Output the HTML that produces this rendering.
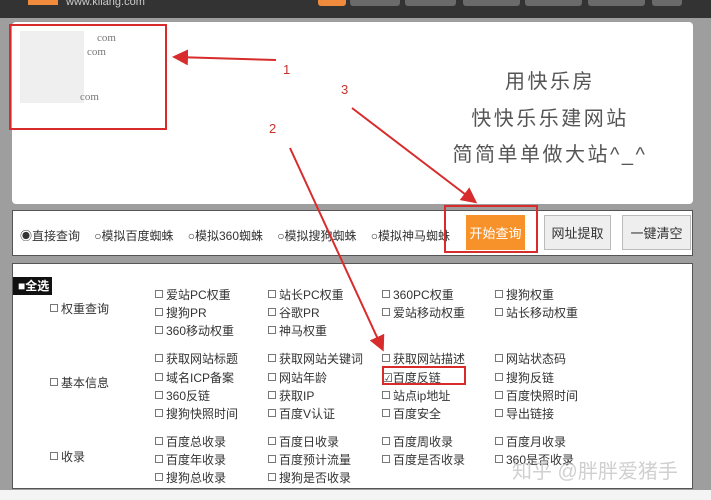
<!DOCTYPE html>
<html><head><meta charset="utf-8"><style>
*{margin:0;padding:0;box-sizing:border-box}
body{width:711px;height:500px;background:#9e9e9e;position:relative;overflow:hidden;font-family:"Liberation Sans","Noto Sans CJK SC",sans-serif;color:#333}
.a{position:absolute}
.hdr{left:0;top:0;width:711px;height:18px;background:#333}
.tab{top:0;height:6px;background:#6a6a6a;border-radius:0 0 3px 3px}
.ta{left:12px;top:22px;width:681px;height:182px;background:#fff;border-radius:4px}
.opt{left:12px;top:210px;width:681px;height:46px;background:#fff;border:1px solid #555}
.pan{left:12px;top:263px;width:681px;height:226px;background:#fff;border:1px solid #555}
.big{font-size:20px;color:#555;letter-spacing:2.5px;left:435px;width:230px;text-align:center}
.btn{top:215px;height:35px;font-size:13px;line-height:35px;text-align:center;border:1px solid #bbb;background:#eee;color:#333}
.rb{border:2px solid #d82c2c}
.i{font-size:12px;white-space:nowrap;color:#333}
.i:before{content:"";display:inline-block;width:6px;height:6px;border:1px solid #777;margin-right:3px;vertical-align:1px}
.r{font-size:12px;white-space:nowrap;color:#333;word-spacing:2px}
.n{color:#c8322c;font-size:13px}
</style></head><body>
<div class="a hdr"></div>
<div class="a" style="left:28px;top:0;width:30px;height:5px;background:#f08a3c"></div>
<div class="a" style="left:66px;top:-4px;color:#ccc;font-size:11px">www.kliang.com</div>
<div class="a tab" style="left:318px;width:28px;background:#f08a3c"></div>
<div class="a tab" style="left:350px;width:50px"></div>
<div class="a tab" style="left:405px;width:51px"></div>
<div class="a tab" style="left:463px;width:57px"></div>
<div class="a tab" style="left:525px;width:57px"></div>
<div class="a tab" style="left:588px;width:57px"></div>
<div class="a tab" style="left:652px;width:30px"></div>
<div class="a ta"></div>
<div class="a" style="left:20px;top:31px;width:64px;height:72px;background:#efefef"></div>
<div class="a" style="left:97px;top:31px;font:11px 'Liberation Serif',serif;color:#777;line-height:15px">com</div>
<div class="a" style="left:87px;top:46px;font:11px 'Liberation Serif',serif;color:#777">com</div>
<div class="a" style="left:80px;top:91px;font:11px 'Liberation Serif',serif;color:#777">com</div>
<div class="a big" style="top:65px">用快乐房</div>
<div class="a big" style="top:102px">快快乐乐建网站</div>
<div class="a big" style="top:138px">简简单单做大站^_^</div>
<div class="a opt"></div>
<div class="a r" style="left:20px;top:227px;width:430px;display:flex;justify-content:space-between"><span>◉直接查询</span><span>○模拟百度蜘蛛</span><span>○模拟360蜘蛛</span><span>○模拟搜狗蜘蛛</span><span>○模拟神马蜘蛛</span></div>
<div class="a btn" style="left:466px;width:59px;background:#f7922a;border-color:#f7922a;color:#fff">开始查询</div>
<div class="a btn" style="left:544px;width:67px">网址提取</div>
<div class="a btn" style="left:622px;width:69px">一键清空</div>
<div class="a pan"></div>
<div class="a" style="left:13px;top:277px;width:39px;height:18px;background:#111;color:#fff;font-size:12px;font-weight:bold;line-height:18px;padding-left:5px">■全选</div>
<div class="a i" style="left:50px;top:300px">权重查询</div>
<div class="a i" style="left:50px;top:374px">基本信息</div>
<div class="a i" style="left:50px;top:448px">收录</div>
<div class="a i" style="left:155px;top:286px">爱站PC权重</div><div class="a i" style="left:268px;top:286px">站长PC权重</div><div class="a i" style="left:382px;top:286px">360PC权重</div><div class="a i" style="left:495px;top:286px">搜狗权重</div>
<div class="a i" style="left:155px;top:304px">搜狗PR</div><div class="a i" style="left:268px;top:304px">谷歌PR</div><div class="a i" style="left:382px;top:304px">爱站移动权重</div><div class="a i" style="left:495px;top:304px">站长移动权重</div>
<div class="a i" style="left:155px;top:322px">360移动权重</div><div class="a i" style="left:268px;top:322px">神马权重</div>
<div class="a i" style="left:155px;top:350px">获取网站标题</div><div class="a i" style="left:268px;top:350px">获取网站关键词</div><div class="a i" style="left:382px;top:350px">获取网站描述</div><div class="a i" style="left:495px;top:350px">网站状态码</div>
<div class="a i" style="left:155px;top:369px">域名ICP备案</div><div class="a i" style="left:268px;top:369px">网站年龄</div><div class="a" style="left:382px;top:369px;font-size:12px">☑百度反链</div><div class="a i" style="left:495px;top:369px">搜狗反链</div>
<div class="a i" style="left:155px;top:387px">360反链</div><div class="a i" style="left:268px;top:387px">获取IP</div><div class="a i" style="left:382px;top:387px">站点ip地址</div><div class="a i" style="left:495px;top:387px">百度快照时间</div>
<div class="a i" style="left:155px;top:405px">搜狗快照时间</div><div class="a i" style="left:268px;top:405px">百度V认证</div><div class="a i" style="left:382px;top:405px">百度安全</div><div class="a i" style="left:495px;top:405px">导出链接</div>
<div class="a i" style="left:155px;top:433px">百度总收录</div><div class="a i" style="left:268px;top:433px">百度日收录</div><div class="a i" style="left:382px;top:433px">百度周收录</div><div class="a i" style="left:495px;top:433px">百度月收录</div>
<div class="a i" style="left:155px;top:451px">百度年收录</div><div class="a i" style="left:268px;top:451px">百度预计流量</div><div class="a i" style="left:382px;top:451px">百度是否收录</div><div class="a i" style="left:495px;top:451px">360是否收录</div>
<div class="a i" style="left:155px;top:469px">搜狗总收录</div><div class="a i" style="left:268px;top:469px">搜狗是否收录</div>
<div class="a" style="left:512px;top:455px;font-size:20px;color:rgba(200,200,200,.85)">知乎 @胖胖爱猪手</div>
<div class="a" style="left:0;top:490px;width:711px;height:10px;background:#f4f4f4"></div>
<div class="a rb" style="left:9px;top:24px;width:158px;height:106px"></div>
<div class="a rb" style="left:444px;top:205px;width:94px;height:48px"></div>
<div class="a rb" style="left:382px;top:366px;width:84px;height:19px"></div>
<div class="a n" style="left:283px;top:62px">1</div>
<div class="a n" style="left:269px;top:121px">2</div>
<div class="a n" style="left:341px;top:82px">3</div>
<svg class="a" style="left:0;top:0" width="711" height="500">
<defs><marker id="m" markerWidth="8" markerHeight="8" refX="6" refY="4" orient="auto"><path d="M0,0 L8,4 L0,8 z" fill="#d82c2c"/></marker></defs>
<g stroke="#d82c2c" stroke-width="2" fill="none">
<line x1="276" y1="60" x2="176" y2="57" marker-end="url(#m)"/>
<line x1="290" y1="148" x2="382" y2="348" marker-end="url(#m)"/>
<line x1="352" y1="108" x2="474" y2="201" marker-end="url(#m)"/>
</g></svg>
</body></html>
